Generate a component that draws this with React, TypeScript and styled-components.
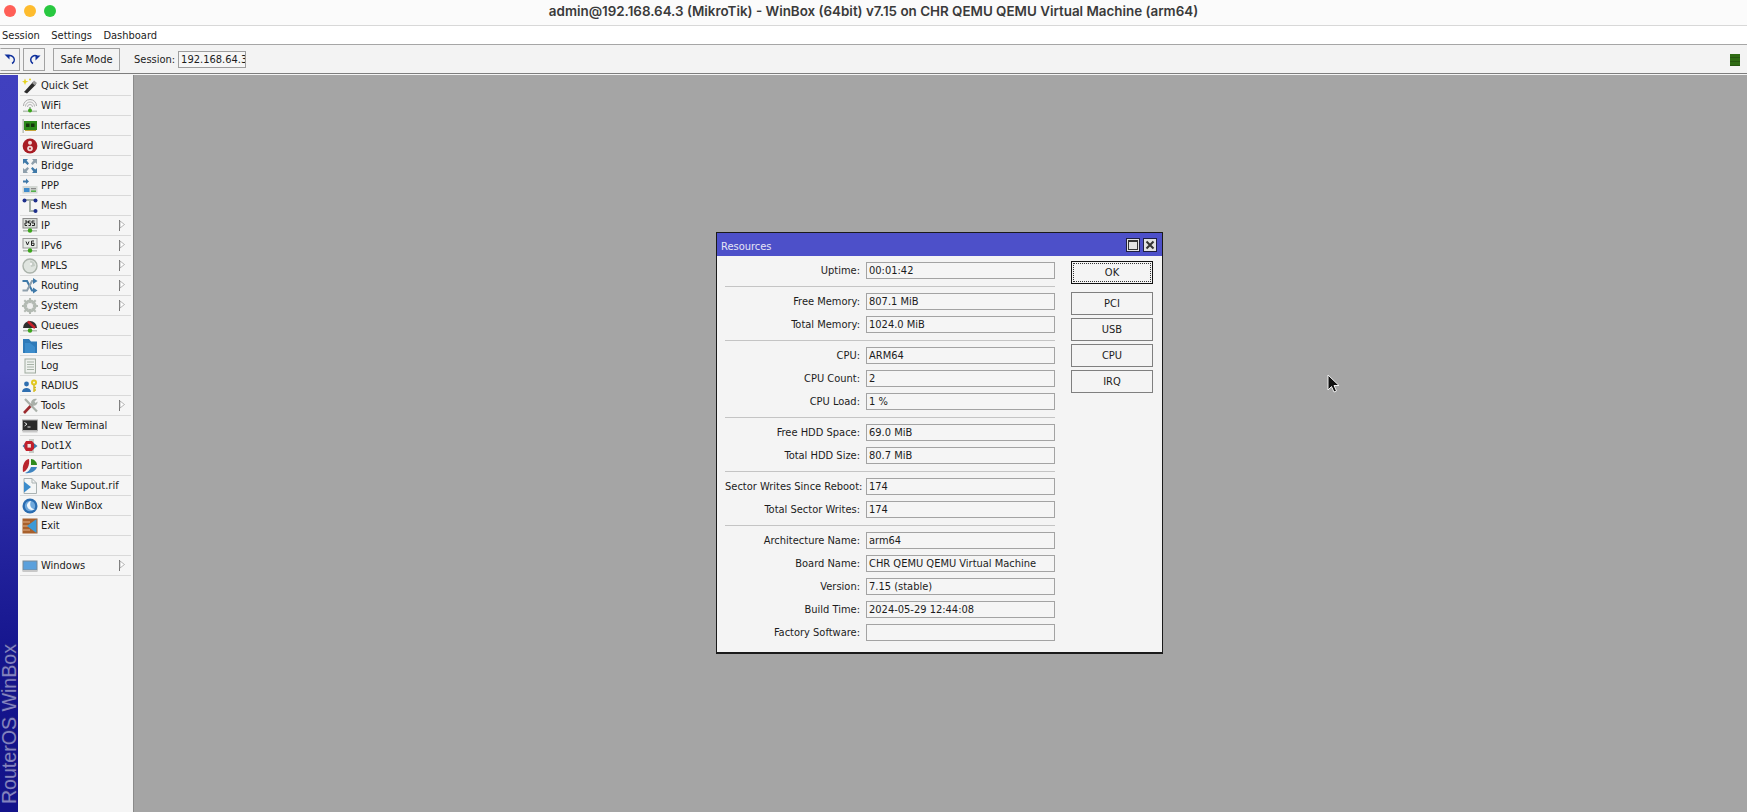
import React from "react";
import styled, { createGlobalStyle } from "styled-components";

const GlobalStyle = createGlobalStyle`
  html, body { margin: 0; padding: 0; height: 100%; overflow: hidden; background: #a5a5a5; }
  body {
    font-family: "DejaVu Sans Condensed", "DejaVu Sans", sans-serif;
    font-stretch: condensed;
    font-size: 11px;
    color: #1c1c1c;
  }
`;

const Page = styled.div`
  width: 1747px;
  height: 812px;
  display: flex;
  flex-direction: column;
  position: relative;
  overflow: hidden;
`;

const TitleBar = styled.div`
  height: 25px;
  flex: none;
  position: relative;
  display: flex;
  align-items: center;
  justify-content: center;
  background: #fbfbfb;
  border-bottom: 1px solid #d8d8d8;
`;

const Lights = styled.div`
  position: absolute;
  left: 4px;
  top: 5px;
  display: flex;
  gap: 8px;
`;

const Light = styled.span<{ $color: string }>`
  width: 12px;
  height: 12px;
  border-radius: 50%;
  background: ${(p) => p.$color};
`;

const TitleText = styled.div`
  font-family: Inter, "Liberation Sans", sans-serif;
  font-stretch: normal;
  font-size: 13.4px;
  font-weight: 600;
  color: #3a3a3a;
  margin-top: -4px;
`;

const MenuBar = styled.div`
  height: 18px;
  flex: none;
  display: flex;
  align-items: center;
  gap: 11.5px;
  padding-left: 2px;
  background: #fff;
  border-bottom: 1px solid #a6a6a6;
`;

const ToolBar = styled.div`
  height: 28px;
  flex: none;
  display: flex;
  align-items: center;
  background: #f3f3f3;
  border-bottom: 1px solid #7d7d7d;
  padding-right: 7px;
`;

const ToolButton = styled.div<{ $width: number; $gap: number }>`
  width: ${(p) => p.$width}px;
  height: 23px;
  box-sizing: border-box;
  margin-right: ${(p) => p.$gap}px;
  display: flex;
  align-items: center;
  justify-content: center;
  border: 1px solid #a2a2a2;
  background: #f3f3f3;
  &:first-child {
    border-left-color: transparent;
  }
`;

const SessionLabel = styled.span`
  margin-left: 14px;
  margin-right: 3px;
`;

const SessionField = styled.div`
  width: 68px;
  height: 17px;
  box-sizing: border-box;
  border: 1px solid #9e9e9e;
  background: #f6f6f6;
  padding-left: 2px;
  line-height: 15px;
  overflow: hidden;
  white-space: nowrap;
`;

const Status = styled.div`
  margin-left: auto;
  width: 10px;
  height: 12px;
  margin-top: 1px;
  background: repeating-linear-gradient(#2f6b13 0, #2f6b13 3px, #25560f 3px, #25560f 4px);
`;

const Body = styled.div`
  flex: 1;
  display: flex;
  min-height: 0;
  padding-top: 1px;
  background: #f4f4f4;
`;

const Strip = styled.div`
  width: 18px;
  flex: none;
  display: flex;
  justify-content: center;
  align-items: flex-end;
  padding-bottom: 8px;
  box-sizing: border-box;
  background: linear-gradient(#4040bf, #3a3ab8 40%, #14148c 80%, #13138a);
`;

const StripText = styled.div`
  writing-mode: vertical-rl;
  transform: rotate(180deg);
  font-family: "Liberation Sans", sans-serif;
  font-stretch: normal;
  font-size: 19.6px;
  line-height: 18px;
  white-space: nowrap;
  color: #8383bf;
  text-shadow: 1px 0 1px #2a2a80;
`;

const SideMenu = styled.div`
  width: 116px;
  flex: none;
  box-sizing: border-box;
  border-right: 1px solid #8a8a8a;
  background: #f5f5f5;
  padding: 1px 2px 0;
`;

const MenuRow = styled.div`
  height: 20px;
  box-sizing: border-box;
  display: flex;
  align-items: center;
  border-bottom: 1px solid #d9d9d9;
  padding-left: 2px;
  gap: 3px;
`;

const RowIcon = styled.svg`
  width: 16px;
  height: 16px;
  flex: none;
`;

const Arrow = styled.svg`
  width: 6px;
  height: 11px;
  margin-left: auto;
  margin-right: 6px;
`;

const Desktop = styled.div`
  flex: 1;
  background: #a5a5a5;
`;

const Window = styled.div`
  position: absolute;
  left: 716px;
  top: 232px;
  width: 447px;
  height: 422px;
  box-sizing: border-box;
  border: 1px solid #1a1a1a;
  border-bottom-width: 2px;
  background: #f4f4f4;
  display: flex;
  flex-direction: column;
`;

const WindowTitle = styled.div`
  height: 23px;
  flex: none;
  display: flex;
  align-items: center;
  gap: 3px;
  padding: 0 5px 0 4px;
  background: #4d50c9;
  color: #e6e6f5;
`;

const WindowName = styled.span`
  flex: 1;
  padding-top: 3px;
`;

const WinButton = styled.div`
  width: 14px;
  height: 14px;
  box-sizing: border-box;
  display: flex;
  align-items: center;
  justify-content: center;
  border: 1px solid #1f1f3f;
  background: #e2e2e2;
`;

const WindowBody = styled.div`
  flex: 1;
  display: flex;
  padding: 6px 0 0 8px;
`;

const Form = styled.div`
  width: 330px;
  flex: none;
  display: flex;
  flex-direction: column;
`;

const Group = styled.div`
  display: flex;
  flex-direction: column;
  gap: 6px;
`;

const Separator = styled.div`
  height: 1px;
  background: #c4c4c4;
  margin: 7px 0 6px;
`;

const FieldRow = styled.div`
  display: flex;
  align-items: center;
  height: 17px;
`;

const FieldLabel = styled.div`
  width: 135px;
  flex: none;
  margin-right: 6px;
  text-align: right;
  white-space: nowrap;
`;

const FieldValue = styled.div`
  flex: 1;
  height: 17px;
  box-sizing: border-box;
  border: 1px solid #a3a3a3;
  padding-left: 2px;
  line-height: 15px;
  white-space: nowrap;
  background: #f5f5f5;
`;

const Actions = styled.div`
  margin-left: 16px;
  margin-top: -1px;
  width: 82px;
  display: flex;
  flex-direction: column;
  gap: 3px;
`;

const ActionButton = styled.div<{ $primary?: boolean }>`
  height: 23px;
  box-sizing: border-box;
  display: flex;
  align-items: center;
  justify-content: center;
  background: #f4f4f4;
  border: 1px solid ${(p) => (p.$primary ? "#111" : "#7f7f7f")};
  outline: ${(p) => (p.$primary ? "1px dotted #333" : "none")};
  outline-offset: -3px;
  margin-bottom: ${(p) => (p.$primary ? "5px" : "0")};
`;

const Cursor = styled.svg`
  position: absolute;
  left: 1326px;
  top: 374px;
  width: 14px;
  height: 20px;
`;

const icons: Record<string, React.ReactNode> = {
  quick: (
    <>
      <path d="M2 14 L11 4 L14 6.5 L5 15.5 Z" fill="#2a2a2a" />
      <path d="M10 5 L12 2.5 L15 5 L13 7.5 Z" fill="#9a9a9a" />
      <path d="M3 0.5 L4 3 L6.5 3.5 L4 4.5 L3 7 L2 4.5 L0 3.5 L2 3 Z" fill="#e4d21c" />
      <circle cx="8" cy="1.5" r="1" fill="#e4d21c" />
    </>
  ),
  wifi: (
    <>
      <path d="M1.5 8 A6.5 6.5 0 0 1 14.5 8" fill="none" stroke="#a9a9a9" />
      <path d="M3.5 8.5 A4.5 4.5 0 0 1 12.5 8.5" fill="none" stroke="#b5b5b5" />
      <path d="M5.5 9 A2.5 2.5 0 0 1 10.5 9" fill="none" stroke="#b5b5b5" />
      <rect x="7.3" y="9" width="1.4" height="5" fill="#8a9a8a" />
      <rect x="1" y="12.5" width="14" height="1.6" fill="#b5c0b5" />
      <circle cx="8" cy="12.5" r="2" fill="#3aa51a" />
    </>
  ),
  interfaces: (
    <>
      <rect x="0.5" y="1" width="1.3" height="14" fill="#b0b8b0" />
      <rect x="2" y="3" width="13" height="9" fill="#2c8a1c" />
      <rect x="4" y="5.5" width="3.5" height="3.5" fill="#16350e" />
      <rect x="9" y="5.5" width="3.5" height="3.5" fill="#16350e" />
      <path d="M3 12.5 H14" stroke="#c2a53a" />
    </>
  ),
  wireguard: (
    <>
      <circle cx="8" cy="8" r="7.4" fill="#a81c24" />
      <circle cx="8" cy="4.8" r="2" fill="#f2d8d8" />
      <circle cx="8" cy="10.5" r="2.8" fill="#f2d8d8" />
      <circle cx="8" cy="10.5" r="1" fill="#a81c24" />
    </>
  ),
  bridge: (
    <>
      <path d="M1 1 H6 L4.6 2.6 L7 5.5 L5.5 7 L2.8 4.4 L1 6 Z" fill="#3f79a8" />
      <path d="M15 1 H10 L11.4 2.6 L9 5.5 L10.5 7 L13.2 4.4 L15 6 Z" fill="#8fa0ac" />
      <path d="M1 15 H6 L4.6 13.4 L7 10.5 L5.5 9 L2.8 11.6 L1 10 Z" fill="#8fa0ac" />
      <path d="M15 15 H10 L11.4 13.4 L9 10.5 L10.5 9 L13.2 11.6 L15 10 Z" fill="#3f79a8" />
    </>
  ),
  ppp: (
    <>
      <path d="M1 2.5 H4 V0.5 L7 3.5 L4 6 V4.5 H1 Z" fill="#3f79a8" />
      <rect x="0.5" y="8" width="15" height="7.5" fill="#d4d8d4" />
      <rect x="2" y="10" width="5.5" height="4" fill="#3f8ccc" />
      <rect x="9" y="10" width="5" height="1.3" fill="#8a8a8a" />
      <rect x="9" y="12.5" width="5" height="1.3" fill="#35a52a" />
    </>
  ),
  mesh: (
    <>
      <path d="M2 2 H14 M8 2 V13 H13" fill="none" stroke="#a5b0a8" strokeWidth="2" />
      <circle cx="2.5" cy="2.5" r="2" fill="#1e2f8c" />
      <circle cx="13.5" cy="2.5" r="2" fill="#1e2f8c" />
      <circle cx="13.5" cy="13" r="2" fill="#1e2f8c" />
    </>
  ),
  ip: (
    <>
      <rect x="1" y="0.5" width="14" height="9.5" fill="#d8dcd8" stroke="#8a8a8a" />
      <path d="M3 3 H5 V5 H3 V7.5 H5 M6.5 3 H8.5 M6.5 3 V5 H8.5 V7.5 H6.5 M10 3 H12.5 M10 3 V5 H12.5 V7.5 H10" fill="none" stroke="#222" />
      <rect x="1" y="12" width="14" height="1.6" fill="#b5bcb5" />
      <circle cx="8" cy="12.5" r="2.2" fill="#3aa51a" />
    </>
  ),
  ipv6: (
    <>
      <rect x="1" y="0.5" width="14" height="9.5" fill="#e8ece8" stroke="#9a9a9a" />
      <path d="M4 3.5 L5.5 7 L7 3.5 M12 3 H9.5 V7.5 H12 V5.2 H9.5" fill="none" stroke="#222" />
      <rect x="1" y="12" width="14" height="1.6" fill="#b5bcb5" />
      <circle cx="8" cy="12.5" r="2.2" fill="#3aa51a" />
    </>
  ),
  mpls: (
    <>
      <circle cx="8" cy="8" r="7" fill="#dfe4df" stroke="#aab2aa" strokeWidth="1.4" />
      <path d="M8 2.5 A5.5 5.5 0 0 1 13 8 L9 9 Z" fill="#c4cbc4" />
      <circle cx="9" cy="6" r="1.2" fill="#f4f4f4" />
    </>
  ),
  routing: (
    <>
      <path d="M0.5 3 H5 L10 12.5 H12" fill="none" stroke="#3f79a8" strokeWidth="2" />
      <path d="M0.5 12.5 H5 L10 3 H12" fill="none" stroke="#8fa0ac" strokeWidth="2" />
      <path d="M11 0 L15.5 3 L11 6 Z M11 9.5 L15.5 12.5 L11 15.5 Z" fill="#3f79a8" />
    </>
  ),
  system: (
    <>
      <circle cx="8" cy="8" r="5" fill="none" stroke="#b3bab3" strokeWidth="3" />
      <path d="M8 0 V16 M0 8 H16 M2.3 2.3 L13.7 13.7 M13.7 2.3 L2.3 13.7" stroke="#b3bab3" strokeWidth="2" />
      <circle cx="8" cy="8" r="3" fill="#f0f0f0" />
    </>
  ),
  queues: (
    <>
      <path d="M1 10 A7 7 0 0 1 15 10 Z" fill="#2e2e2e" />
      <path d="M6 3.5 L13 10" stroke="#c8202a" strokeWidth="2.4" />
      <rect x="1" y="12" width="14" height="1.5" fill="#b5bcb5" />
      <circle cx="8" cy="12.5" r="2.2" fill="#3aa51a" />
    </>
  ),
  files: (
    <>
      <path d="M1 1 H7 L9 3.5 H15 V15 H1 Z" fill="#2f7ab8" />
      <path d="M3 5 L8 5 L13 9 V15 H3 Z" fill="#3c8ccb" />
    </>
  ),
  log: (
    <>
      <rect x="3" y="1" width="10.5" height="14" fill="#eef1ee" stroke="#a0aba0" />
      <path d="M5 4 H12 M5 6.5 H12 M5 9 H12 M5 11.5 H12" stroke="#a7b3a7" />
    </>
  ),
  radius: (
    <>
      <circle cx="4.5" cy="6" r="2.4" fill="#2f6fb0" />
      <path d="M0 14 C0 8.5 9 8.5 9 14 Z" fill="#2f6fb0" />
      <circle cx="12" cy="4.5" r="3" fill="#e2c81e" />
      <circle cx="12" cy="4.5" r="1" fill="#f4f4f4" />
      <path d="M12 7 V14 M12 12 H14 M12 9.5 H14" stroke="#d4b918" strokeWidth="1.4" />
    </>
  ),
  tools: (
    <>
      <path d="M2 15 L10 6.5" stroke="#9c2a2e" strokeWidth="2.6" />
      <path d="M3 1 L15 13.5" stroke="#a9b0a9" strokeWidth="2.2" />
      <path d="M9 5 C9 2 12 0 15 1 L12.5 3.5 L13.5 5 L15.5 3.5 C16 7 12 8.5 10 7.5 Z" fill="#a9b0a9" />
    </>
  ),
  terminal: (
    <>
      <rect x="0.5" y="2" width="15" height="10.5" fill="#2a2a2a" stroke="#a5a5a5" />
      <path d="M2.5 4.5 L5 6.2 L2.5 8 M5.5 9 H8.5" fill="none" stroke="#e8e8e8" />
      <rect x="0.5" y="12.5" width="15" height="2" fill="#c8c8c8" />
    </>
  ),
  dot1x: (
    <>
      <rect x="7" y="1" width="5" height="14" fill="#c6cbc6" />
      <path d="M0.5 8 L3 5.5 V10.5 Z M11 4.5 L15.5 8 L11 11.5 Z" fill="#3f79a8" />
      <path d="M4 3 H10 L12 5.5 V10.5 L10 13 H4 L2.5 10.5 V5.5 Z" fill="#c1202c" />
      <rect x="5.5" y="6" width="3.4" height="3.6" fill="#f0e0e0" />
    </>
  ),
  partition: (
    <>
      <path d="M7 1 C2 2 0 8 1 14 C5 13 8 7 7 1 Z" fill="#b8242c" />
      <path d="M9 1 V7 H15 C15 4 12 1 9 1 Z" fill="#2f8a1c" />
      <path d="M3 15 C8 16 14 13 15 9 H9 C8 12 6 14 3 15 Z" fill="#3f84c0" />
    </>
  ),
  supout: (
    <>
      <path d="M2 0.5 H10 L14.5 5 V15.5 H2 Z" fill="#f4f6f6" stroke="#aab2b2" />
      <path d="M10 0.5 V5 H14.5" fill="none" stroke="#aab2b2" />
      <path d="M2 3.5 L9 9 L2 14.5 Z" fill="#3c8ccb" />
    </>
  ),
  winbox: (
    <>
      <circle cx="8" cy="8" r="7.5" fill="#2a6cb0" />
      <circle cx="8" cy="8" r="5.2" fill="#6fa8dc" />
      <path d="M9 3 C7 7 9 11 13 11 C10 13 6 12 5 8 C4.5 6 6.5 3.5 9 3 Z" fill="#f0f6fb" />
    </>
  ),
  exit: (
    <>
      <rect x="0.5" y="0.5" width="15" height="15" fill="#a8602c" />
      <path d="M1 4 H8 M1 8 H6 M1 12 H8" stroke="#e0b088" />
      <path d="M14.5 1 V15 L5 8 Z" fill="#3c9ad8" />
    </>
  ),
  windows: (
    <>
      <rect x="1" y="3" width="14" height="9" fill="#5aa0dc" stroke="#7a8a96" />
      <rect x="0.5" y="12" width="15" height="2" fill="#c8c8c8" />
    </>
  ),
};

const menu: { label: string; icon: string; sub?: boolean }[] = [
  { label: "Quick Set", icon: "quick" },
  { label: "WiFi", icon: "wifi" },
  { label: "Interfaces", icon: "interfaces" },
  { label: "WireGuard", icon: "wireguard" },
  { label: "Bridge", icon: "bridge" },
  { label: "PPP", icon: "ppp" },
  { label: "Mesh", icon: "mesh" },
  { label: "IP", icon: "ip", sub: true },
  { label: "IPv6", icon: "ipv6", sub: true },
  { label: "MPLS", icon: "mpls", sub: true },
  { label: "Routing", icon: "routing", sub: true },
  { label: "System", icon: "system", sub: true },
  { label: "Queues", icon: "queues" },
  { label: "Files", icon: "files" },
  { label: "Log", icon: "log" },
  { label: "RADIUS", icon: "radius" },
  { label: "Tools", icon: "tools", sub: true },
  { label: "New Terminal", icon: "terminal" },
  { label: "Dot1X", icon: "dot1x" },
  { label: "Partition", icon: "partition" },
  { label: "Make Supout.rif", icon: "supout" },
  { label: "New WinBox", icon: "winbox" },
  { label: "Exit", icon: "exit" },
];

const groups: [string, string][][] = [
  [["Uptime:", "00:01:42"]],
  [
    ["Free Memory:", "807.1 MiB"],
    ["Total Memory:", "1024.0 MiB"],
  ],
  [
    ["CPU:", "ARM64"],
    ["CPU Count:", "2"],
    ["CPU Load:", "1 %"],
  ],
  [
    ["Free HDD Space:", "69.0 MiB"],
    ["Total HDD Size:", "80.7 MiB"],
  ],
  [
    ["Sector Writes Since Reboot:", "174"],
    ["Total Sector Writes:", "174"],
  ],
  [
    ["Architecture Name:", "arm64"],
    ["Board Name:", "CHR QEMU QEMU Virtual Machine"],
    ["Version:", "7.15 (stable)"],
    ["Build Time:", "2024-05-29 12:44:08"],
    ["Factory Software:", ""],
  ],
];

function Row({ label, icon, sub }: { label: string; icon?: string; sub?: boolean }) {
  return (
    <MenuRow>
      {icon ? <RowIcon viewBox="0 0 16 16">{icons[icon]}</RowIcon> : null}
      {label}
      {sub ? (
        <Arrow viewBox="0 0 6 11">
          <path d="M0.5 0 V11" stroke="#777" />
          <path d="M1 1 L5.5 4.5 L1 8 Z" fill="#fff" stroke="#9a9a9a" strokeWidth="0.7" />
        </Arrow>
      ) : null}
    </MenuRow>
  );
}

export default function App() {
  return (
    <Page>
      <GlobalStyle />
      <TitleBar>
        <Lights>
          <Light $color="#ff5f57" />
          <Light $color="#febc2e" />
          <Light $color="#28c840" />
        </Lights>
        <TitleText>admin@192.168.64.3 (MikroTik) - WinBox (64bit) v7.15 on CHR QEMU QEMU Virtual Machine (arm64)</TitleText>
      </TitleBar>
      <MenuBar>
        <span>Session</span>
        <span>Settings</span>
        <span>Dashboard</span>
      </MenuBar>
      <ToolBar>
        <ToolButton $width={20} $gap={3}>
          <svg width="13" height="12" viewBox="0 0 13 12">
            <path d="M4 3 A4.2 4.2 0 1 1 8 10.5" fill="none" stroke="#0e2f9c" strokeWidth="1.5" />
            <path d="M0.5 1.5 L5.5 1.5 L5.5 6.5 Z" fill="#0e2f9c" />
          </svg>
        </ToolButton>
        <ToolButton $width={22} $gap={8}>
          <svg width="13" height="12" viewBox="0 0 13 12">
            <path d="M9 3 A4.2 4.2 0 1 0 5 10.5" fill="none" stroke="#0e2f9c" strokeWidth="1.5" />
            <path d="M12.5 1.5 L7.5 1.5 L7.5 6.5 Z" fill="#0e2f9c" transform="translate(0 1)" />
          </svg>
        </ToolButton>
        <ToolButton $width={67} $gap={0}>Safe Mode</ToolButton>
        <SessionLabel>Session:</SessionLabel>
        <SessionField>192.168.64.3</SessionField>
        <Status />
      </ToolBar>
      <Body>
        <Strip>
          <StripText>RouterOS WinBox</StripText>
        </Strip>
        <SideMenu>
          {menu.map((m) => (
            <Row key={m.label} label={m.label} icon={m.icon} sub={m.sub} />
          ))}
          <Row label="" />
          <Row label="Windows" icon="windows" sub />
        </SideMenu>
        <Desktop />
      </Body>
      <Window>
        <WindowTitle>
          <WindowName>Resources</WindowName>
          <WinButton>
            <svg width="10" height="10" viewBox="0 0 10 10">
              <rect x="0.5" y="0.5" width="9" height="9" fill="#e2e2e2" stroke="#333" />
              <rect x="0" y="0" width="10" height="2" fill="#333" />
            </svg>
          </WinButton>
          <WinButton>
            <svg width="10" height="10" viewBox="0 0 10 10">
              <path d="M1.5 1.5 L8.5 8.5 M8.5 1.5 L1.5 8.5" stroke="#333" strokeWidth="2" />
            </svg>
          </WinButton>
        </WindowTitle>
        <WindowBody>
          <Form>
            {groups.map((group, i) => (
              <React.Fragment key={group[0][0]}>
                {i > 0 ? <Separator /> : null}
                <Group>
                  {group.map(([label, value]) => (
                    <FieldRow key={label}>
                      <FieldLabel>{label}</FieldLabel>
                      <FieldValue>{value}</FieldValue>
                    </FieldRow>
                  ))}
                </Group>
              </React.Fragment>
            ))}
          </Form>
          <Actions>
            <ActionButton $primary>OK</ActionButton>
            <ActionButton>PCI</ActionButton>
            <ActionButton>USB</ActionButton>
            <ActionButton>CPU</ActionButton>
            <ActionButton>IRQ</ActionButton>
          </Actions>
        </WindowBody>
      </Window>
      <Cursor viewBox="0 0 14 20">
        <path d="M2 1 V16 L5.5 12.5 L8 18 L10.5 17 L8 11.5 L13 11.5 Z" fill="#111" stroke="#f0f0f0" strokeWidth="1" />
      </Cursor>
    </Page>
  );
}
